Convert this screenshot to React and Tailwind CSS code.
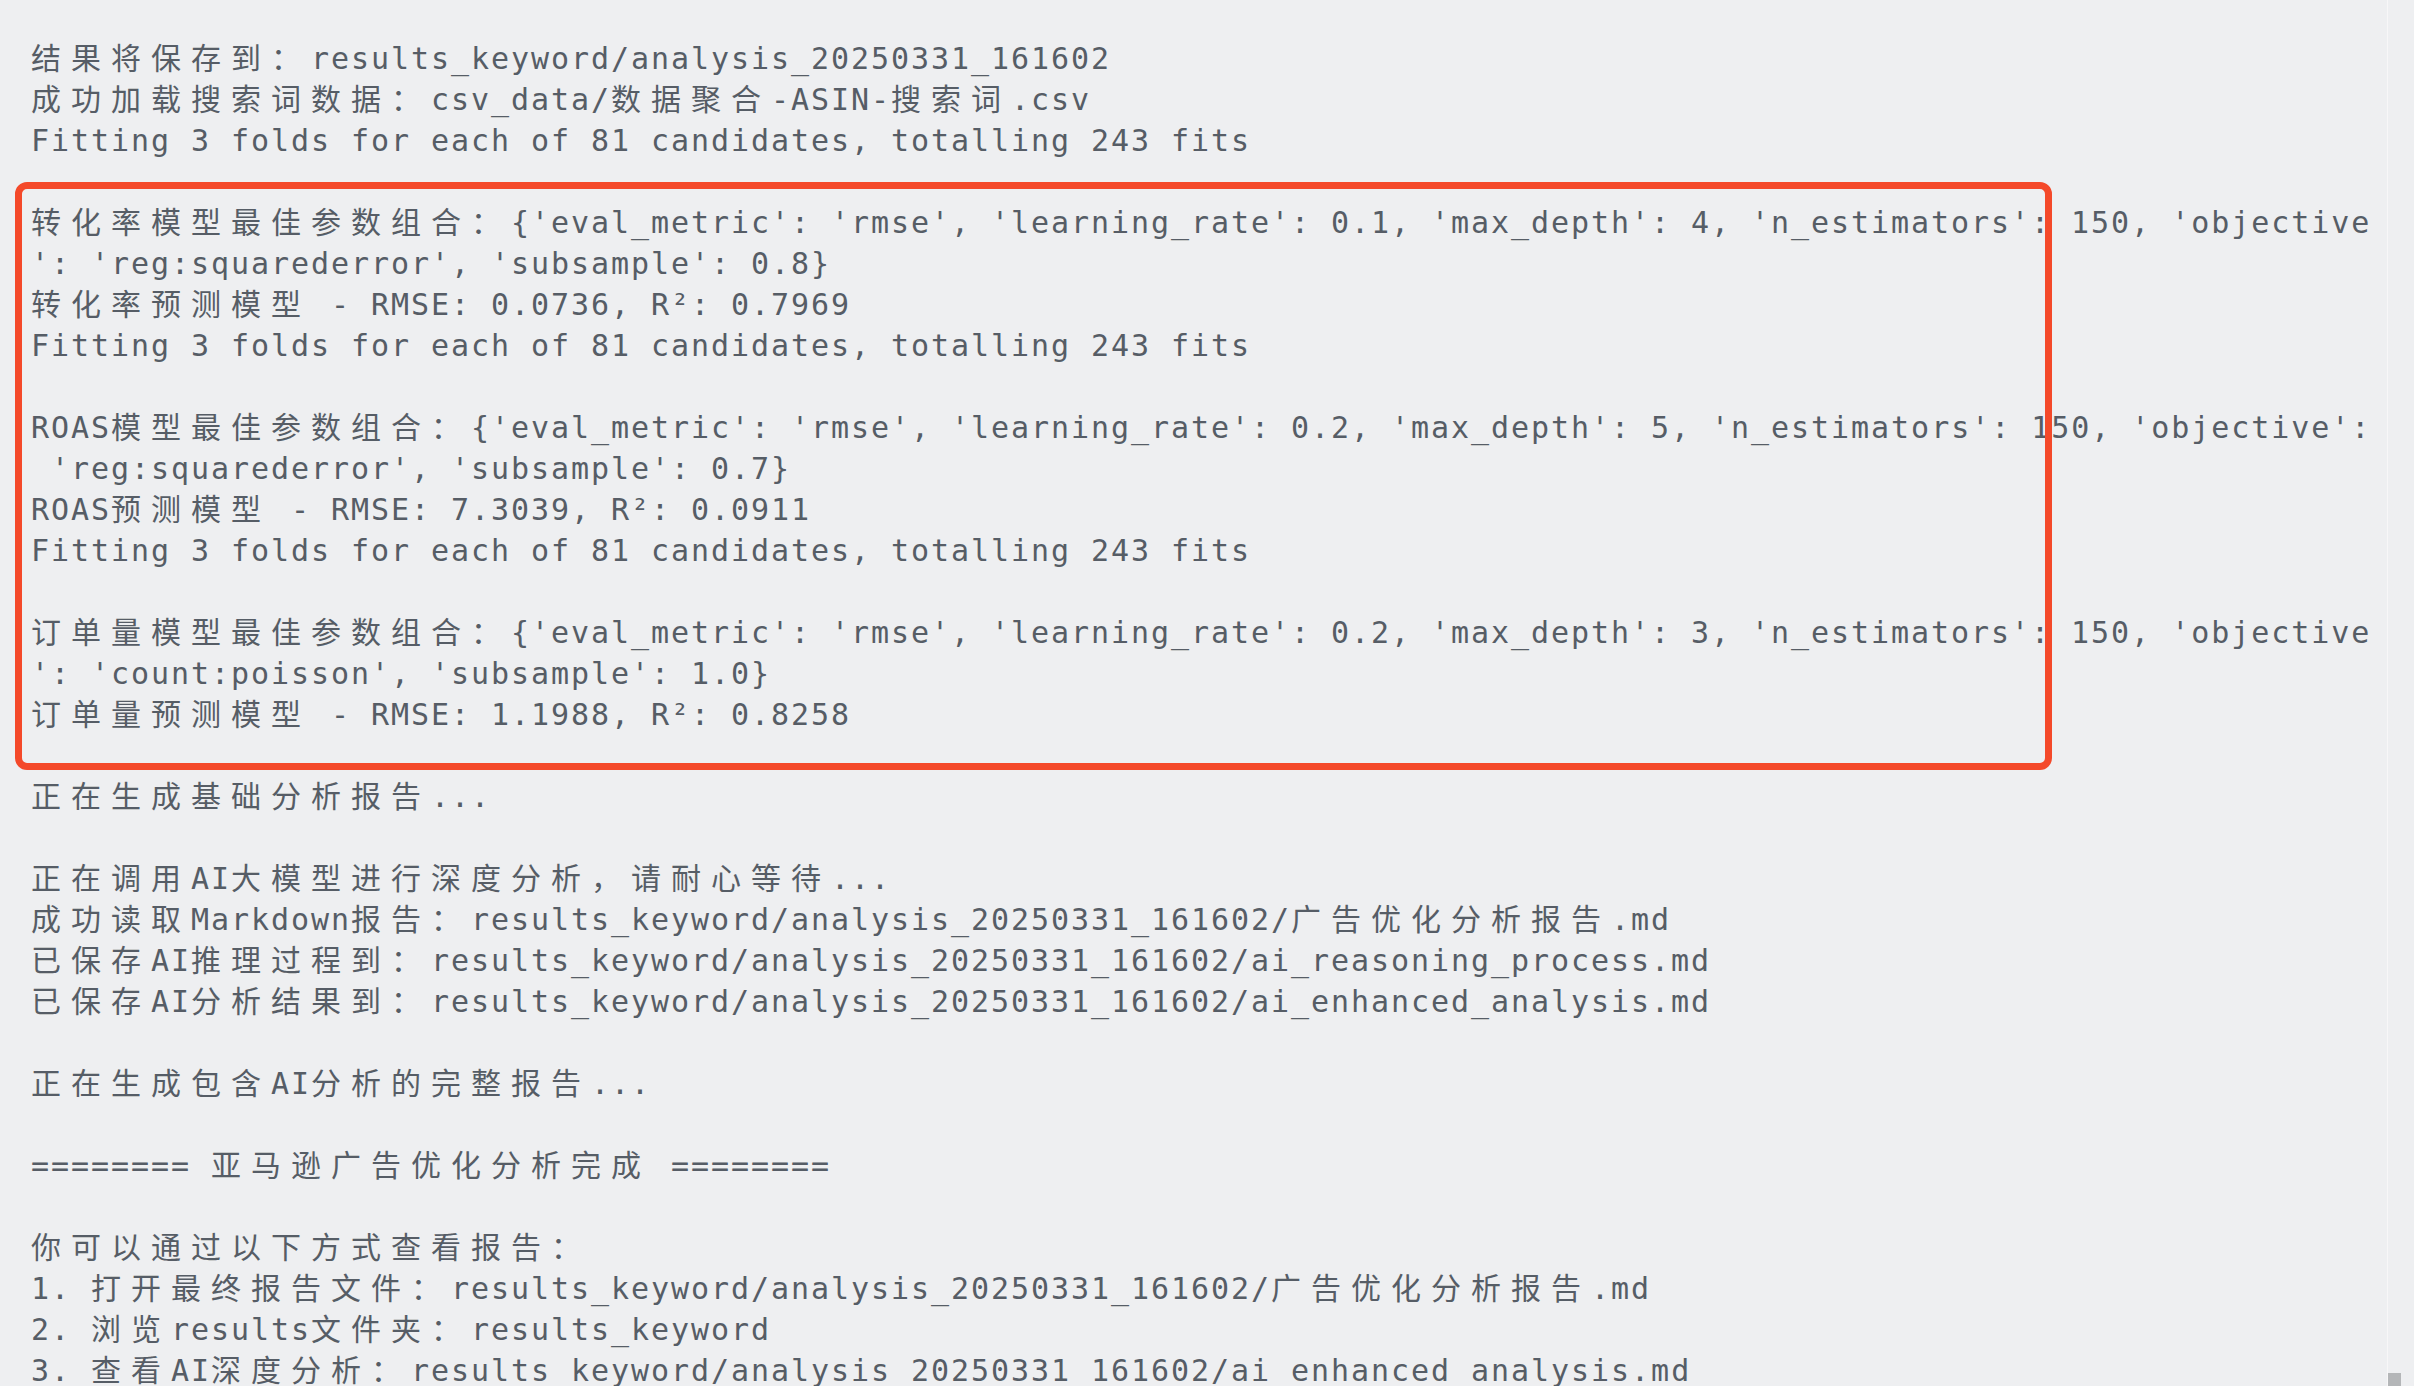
import React from 'react';

const LINES = [
    '结果将保存到：results_keyword/analysis_20250331_161602',
    '成功加载搜索词数据：csv_data/数据聚合-ASIN-搜索词.csv',
    'Fitting 3 folds for each of 81 candidates, totalling 243 fits',
    '',
    "转化率模型最佳参数组合：{'eval_metric': 'rmse', 'learning_rate': 0.1, 'max_depth': 4, 'n_estimators': 150, 'objective",
    "': 'reg:squarederror', 'subsample': 0.8}",
    '转化率预测模型 - RMSE: 0.0736, R²: 0.7969',
    'Fitting 3 folds for each of 81 candidates, totalling 243 fits',
    '',
    "ROAS模型最佳参数组合：{'eval_metric': 'rmse', 'learning_rate': 0.2, 'max_depth': 5, 'n_estimators': 150, 'objective':",
    " 'reg:squarederror', 'subsample': 0.7}",
    'ROAS预测模型 - RMSE: 7.3039, R²: 0.0911',
    'Fitting 3 folds for each of 81 candidates, totalling 243 fits',
    '',
    "订单量模型最佳参数组合：{'eval_metric': 'rmse', 'learning_rate': 0.2, 'max_depth': 3, 'n_estimators': 150, 'objective",
    "': 'count:poisson', 'subsample': 1.0}",
    '订单量预测模型 - RMSE: 1.1988, R²: 0.8258',
    '',
    '正在生成基础分析报告...',
    '',
    '正在调用AI大模型进行深度分析，请耐心等待...',
    '成功读取Markdown报告：results_keyword/analysis_20250331_161602/广告优化分析报告.md',
    '已保存AI推理过程到：results_keyword/analysis_20250331_161602/ai_reasoning_process.md',
    '已保存AI分析结果到：results_keyword/analysis_20250331_161602/ai_enhanced_analysis.md',
    '',
    '正在生成包含AI分析的完整报告...',
    '',
    '======== 亚马逊广告优化分析完成 ========',
    '',
    '你可以通过以下方式查看报告：',
    '1. 打开最终报告文件：results_keyword/analysis_20250331_161602/广告优化分析报告.md',
    '2. 浏览results文件夹：results_keyword',
    '3. 查看AI深度分析：results_keyword/analysis_20250331_161602/ai_enhanced_analysis.md',
];

// wide chars take two cells, so they get more tracking than the latin ones
const CJK = /([\u3000-\u9fff\uff00-\uffef]+)/;

const ConsoleLine = ({ text }) => {
    const parts = text.split(CJK).filter(Boolean);
    return (
        <div className="h-[41px] leading-[41px] whitespace-pre">
            {parts.map((p, i) =>
                CJK.test(p)
                    ? <span key={i} className="tracking-[10px]">{p}</span>
                    : <span key={i}>{p}</span>
            )}
        </div>
    );
};

const App = () => {
    return (
        <div className="w-[2414px] h-[1386px] overflow-hidden bg-[#eeeff1] flex">
            <div className="relative flex-1 pt-[38px] pl-[31px] text-[30px] tracking-[1.94px] text-[#565d66] font-['DejaVu_Sans_Mono','Noto_Sans_CJK_SC',monospace]">
                {LINES.map((line, i) => <ConsoleLine key={i} text={line} />)}

                {/* annotation box drawn over the model results */}
                <div className="absolute left-[15px] top-[182px] w-[2037px] h-[588px] border-[7px] border-[#f4492a] rounded-[12px]"></div>
            </div>

            {/* scrollbar track */}
            <div className="relative w-[27px] border-l border-[#f7f7f8]">
                <div className="absolute left-0 bottom-0 w-[13px] h-[13px] bg-[#b4b6b8]"></div>
            </div>
        </div>
    );
};

export default App;
